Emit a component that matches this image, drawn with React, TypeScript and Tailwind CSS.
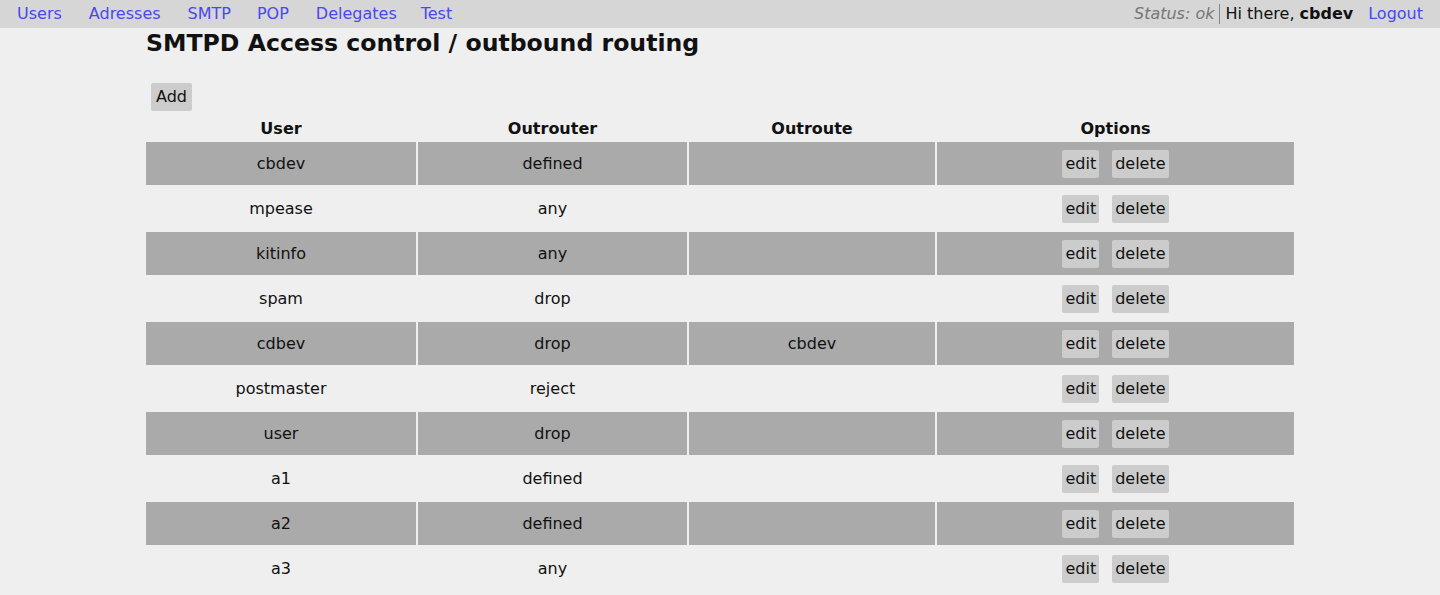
import React from "react";

const rows: [string, string, string][] = [
  ["cbdev", "defined", ""],
  ["mpease", "any", ""],
  ["kitinfo", "any", ""],
  ["spam", "drop", ""],
  ["cdbev", "drop", "cbdev"],
  ["postmaster", "reject", ""],
  ["user", "drop", ""],
  ["a1", "defined", ""],
  ["a2", "defined", ""],
  ["a3", "any", ""],
];

export default function App() {
  return (
    <div className="min-h-[595px] bg-[#efefef] text-[16px] text-[#111]" style={{ fontFamily: '"DejaVu Sans", sans-serif' }}>
      <nav className="flex h-[28px] items-center justify-between bg-[#d6d6d6] px-[17px]">
        <div className="flex text-[#4848f0]">
          <a className="mr-[27px]">Users</a>
          <a className="mr-[27px]">Adresses</a>
          <a className="mr-[26px]">SMTP</a>
          <a className="mr-[27px]">POP</a>
          <a className="mr-[24px]">Delegates</a>
          <a>Test</a>
        </div>
        <div className="flex items-center">
          <span className="italic text-[#777]">Status: ok</span>
          <span className="mx-[5px] h-[20px] w-px bg-[#888]" />
          <span>Hi there, <b>cbdev</b></span>
          <a className="ml-[15px] text-[#4848f0]">Logout</a>
        </div>
      </nav>
      <main className="mx-auto w-[1152px]">
        <h1 className="ml-[2px] text-[23.6px] font-bold leading-[30px]">SMTPD Access control / outbound routing</h1>
        <div className="mt-[25px] pl-[7px]">
          <button className="rounded-[2px] bg-[#cccccc] px-[5px] h-[28px]">Add</button>
        </div>
        <table className="w-full border-separate border-spacing-[2px] mt-[3px]">
          <thead>
            <tr className="font-bold leading-[22px]">
              <th className="w-[270px] p-0 pt-[2px]">User</th>
              <th className="w-[269px] p-0 pt-[2px]">Outrouter</th>
              <th className="w-[246px] p-0 pt-[2px]">Outroute</th>
              <th className="p-0 pt-[2px]">Options</th>
            </tr>
          </thead>
          <tbody>
            {rows.map((r, i) => (
              <tr key={i} className={i % 2 === 0 ? "h-[43px] bg-[#aaaaaa]" : "h-[43px]"}>
                <td className="text-center">{r[0]}</td>
                <td className="text-center">{r[1]}</td>
                <td className="text-center">{r[2]}</td>
                <td className="text-center">
                  <div className="flex justify-center gap-[13px]">
                    <button className="h-[28px] rounded-[2px] bg-[#cccccc] px-[3px]">edit</button>
                    <button className="h-[28px] rounded-[2px] bg-[#cccccc] px-[3px]">delete</button>
                  </div>
                </td>
              </tr>
            ))}
          </tbody>
        </table>
      </main>
    </div>
  );
}
